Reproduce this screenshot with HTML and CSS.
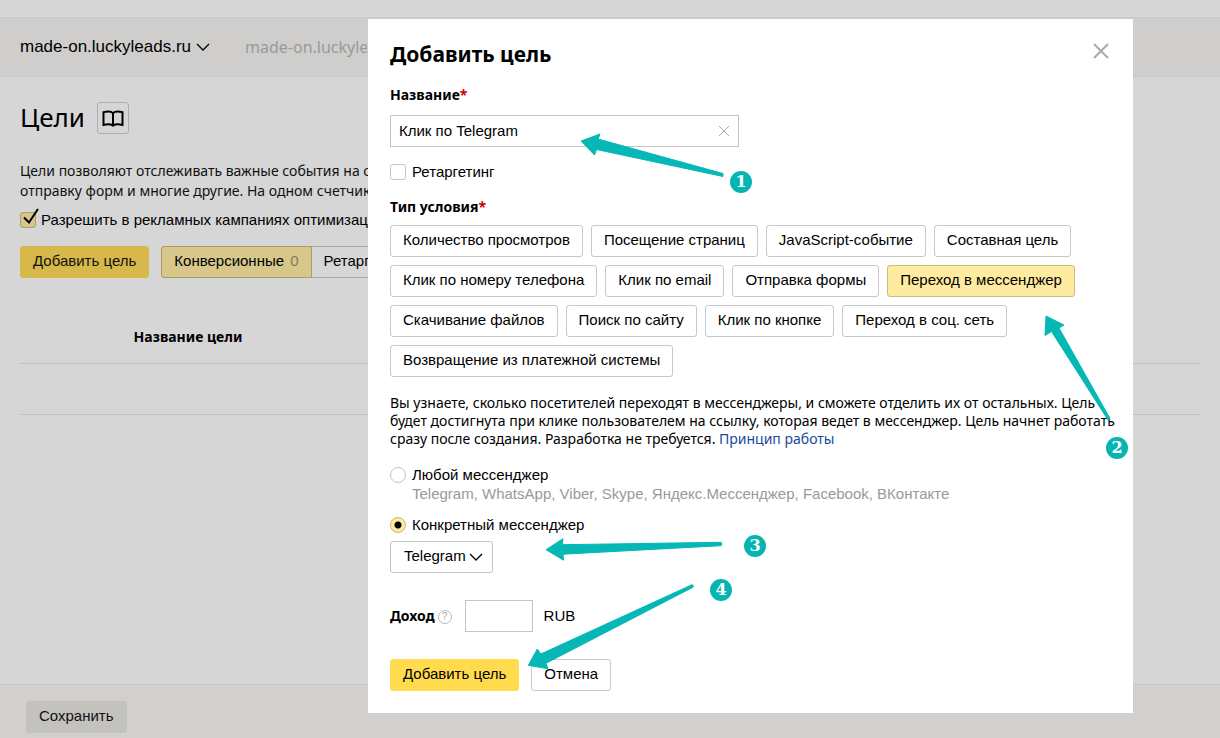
FILE: index.html
```html
<!DOCTYPE html>
<html lang="ru">
<head>
<meta charset="utf-8">
<title>Цели</title>
<link rel="stylesheet" href="styles.css">
</head>
<body>
<div class="page">
  <header class="topbar">
    <button class="site" type="button">made-on.luckyleads.ru
      <svg class="chevron" viewBox="0 0 14 8" aria-hidden="true"><path d="M1 1l6 6 6-6"/></svg>
    </button>
    <span class="site-url">made-on.luckyleads.ru</span>
  </header>

  <main class="content">
    <div class="title-row">
      <h1 class="title">Цели</h1>
      <button class="help-book" type="button" aria-label="Справка">
        <svg viewBox="0 0 22 17" aria-hidden="true"><path d="M11 3.200C9.300 1.300 5 1.200 1.500 2.200V15c3.500-.900 7.500-.700 9.500.600 2-1.300 6-1.500 9.500-.600V2.200C17 1.200 12.700 1.300 11 3.200zM11 3v12"/></svg>
      </button>
    </div>
    <p class="intro">Цели позволяют отслеживать важные события на сайте:<br>отправку форм и многие другие. На одном счетчике</p>
    <label class="check-row"><span class="tick"><input class="box" type="checkbox" checked><svg viewBox="0 0 20 20" aria-hidden="true"><path d="M4 9.500l5 5L18 1"/></svg></span>Разрешить в рекламных кампаниях оптимизацию</label>
    <div class="toolbar">
      <button class="btn btn-main" type="button">Добавить цель</button>
      <div class="tabs">
        <button class="tab tab-on" type="button">Конверсионные <span class="count">0</span></button><button class="tab" type="button">Ретаргетинговые</button>
      </div>
    </div>
    <table class="goals">
      <thead><tr><th>Название цели</th><th></th></tr></thead>
      <tbody><tr><td></td><td></td></tr></tbody>
    </table>
  </main>

  <footer class="bottom">
    <button class="btn btn-save" type="button">Сохранить</button>
  </footer>
</div>

<div class="overlay">
  <section class="modal" role="dialog" aria-labelledby="dialog-title">
    <div class="modal-head">
      <h2 class="modal-title" id="dialog-title">Добавить цель</h2>
      <button class="close" type="button" aria-label="Закрыть"><svg viewBox="0 0 16 16" aria-hidden="true"><path d="M1 1l14 14M15 1L1 15"/></svg></button>
    </div>

    <label class="label" for="name">Название<span class="req">*</span></label>
    <div class="name-field">
      <input class="input" id="name" type="text" value="Клик по Telegram">
      <button class="clear" type="button" aria-label="Очистить"><svg viewBox="0 0 12 12" aria-hidden="true"><path d="M1 1l10 10M11 1L1 11"/></svg></button>
    </div>
    <label class="option retarget"><input class="box" type="checkbox">Ретаргетинг</label>

    <h3 class="label">Тип условия<span class="req">*</span></h3>
    <div class="chips">
      <div class="chip-row">
        <button class="btn" type="button">Количество просмотров</button>
        <button class="btn" type="button">Посещение страниц</button>
        <button class="btn" type="button">JavaScript-событие</button>
        <button class="btn" type="button">Составная цель</button>
      </div>
      <div class="chip-row">
        <button class="btn" type="button">Клик по номеру телефона</button>
        <button class="btn" type="button">Клик по email</button>
        <button class="btn" type="button">Отправка формы</button>
        <button class="btn chip-on" type="button" aria-pressed="true">Переход в мессенджер</button>
      </div>
      <div class="chip-row">
        <button class="btn" type="button">Скачивание файлов</button>
        <button class="btn" type="button">Поиск по сайту</button>
        <button class="btn" type="button">Клик по кнопке</button>
        <button class="btn" type="button">Переход в соц. сеть</button>
      </div>
      <div class="chip-row">
        <button class="btn" type="button">Возвращение из платежной системы</button>
      </div>
    </div>

    <p class="about">Вы узнаете, сколько посетителей переходят в мессенджеры, и сможете отделить их от остальных. Цель<br>будет достигнута при клике пользователем на ссылку, которая ведет в мессенджер. Цель начнет работать<br>сразу после создания. Разработка не требуется. <a class="link" href="#">Принцип работы</a></p>

    <label class="option"><input class="radio" type="radio" name="messenger">Любой мессенджер</label>
    <p class="hint">Telegram, WhatsApp, Viber, Skype, Яндекс.Мессенджер, Facebook, ВКонтакте</p>
    <label class="option specific"><input class="radio" type="radio" name="messenger" checked>Конкретный мессенджер</label>
    <div class="select-wrap">
      <select class="select" aria-label="Мессенджер"><option>Telegram</option></select>
      <svg class="chevron" viewBox="0 0 14 8" aria-hidden="true"><path d="M1 1l6 6 6-6"/></svg>
    </div>

    <div class="income">
      <label class="income-label" for="income">Доход</label>
      <button class="question" type="button" aria-label="Подсказка">?</button>
      <input class="input income-input" id="income" type="text">
      <span>RUB</span>
    </div>

    <div class="actions">
      <button class="btn btn-primary" type="button">Добавить цель</button>
      <button class="btn" type="button">Отмена</button>
    </div>

    <svg class="arrows" viewBox="368 19 765 694" aria-hidden="true">
      <path d="M581 141l19-7-2 5 125 34.500v3L596.500 149.500 594.500 155z"/>
      <path d="M1046 316l18 9-5 3 51 90.500-2 1.500-56.500-88.500-6.500 4z"/>
      <path d="M546 549.700l17-11-.700 6L721 542.300q2 1.700 0 3.400L563 554.200l.500 6z"/>
      <path d="M528.300 665.300l9-16.300 3.500 5L692 584.700q2 .500 1 2.500L546 663.300l2 5.500z"/>
    </svg>
    <span class="mark mark-1">1</span>
    <span class="mark mark-2">2</span>
    <span class="mark mark-3">3</span>
    <span class="mark mark-4">4</span>
  </section>
</div>
</body>
</html>
```
FILE: styles.css
```css
* { box-sizing: border-box; }

body {
  margin: 0;
  background: #d6d6d6;
  color: #000;
  font: 15px/18px "Liberation Sans", Arial, sans-serif;
}

button, input, select { font: inherit; color: inherit; }
button { cursor: pointer; white-space: nowrap; }
h1, h2, h3, p { margin: 0; }

svg {
  display: block;
  fill: none;
  stroke: currentColor;
}

.page {
  display: flex;
  flex-direction: column;
  min-height: 100vh;
  overflow: hidden;
}

.topbar {
  display: flex;
  align-items: center;
  gap: 35px;
  height: 60px;
  margin-top: 17px;
  padding: 0 20px;
  background: #cfcecc;
  border-top: 1px solid #cacaca;
  border-bottom: 1px solid #c8c8c7;
  font-size: 16px;
}

.site {
  display: flex;
  align-items: center;
  gap: 5px;
  padding: 0;
  border: 0;
  background: none;
  font-size: 17px;
}

.chevron { width: 14px; height: 8px; stroke-width: 1.3; }

.site-url {
  width: 122px;
  overflow: hidden;
  color: #999;
  font: 16px/24px "Noto Sans", sans-serif;
  white-space: nowrap;
}

.content { flex: 1; padding: 25px 20px 24px; white-space: nowrap; }

.title-row { display: flex; align-items: center; gap: 12px; }

.title {
  padding-bottom: 2px;
  font: 26px/30px "Noto Sans", sans-serif;
}

.help-book {
  display: grid;
  place-items: center;
  width: 32px;
  height: 32px;
  padding: 0;
  border: 1px solid #aeaeae;
  border-radius: 3px;
  background: none;
}
.help-book svg { width: 22px; height: 17px; stroke-width: 2; }

.intro {
  margin-top: 27px;
  font: 14px/20px "Noto Sans", sans-serif;
  color: #111;
}

.check-row {
  display: flex;
  align-items: center;
  gap: 5px;
  margin-top: 10px;
}

.tick { position: relative; display: flex; }
.tick svg {
  position: absolute;
  left: 0;
  top: -4px;
  width: 20px;
  height: 20px;
  stroke-width: 2;
}

.box, .radio {
  appearance: none;
  flex: none;
  width: 16px;
  height: 16px;
  margin: 0;
  border: 1px solid #c4c4c4;
  border-radius: 3px;
  background: #fff;
}
.tick .box { border-color: #ab9d6c; background: #d8c78b; }

.radio { border-radius: 50%; }
.radio:checked {
  border-color: #c5b67c;
  background: radial-gradient(circle, #000 0 3px, #ffeba0 4px);
}

.toolbar { display: flex; gap: 12px; margin-top: 17px; }

.btn {
  height: 32px;
  padding: 0 12px 2px;
  border: 1px solid #c8c8c8;
  border-radius: 3px;
  background: #fff;
}
.btn-main { background: #d7b84a; border-color: #d7b84a; color: #111; }
.btn-save { background: #c4c2be; border-color: #c4c2be; color: #111; }
.btn-primary { background: #ffdb4d; border-color: #ffdb4d; }
.chip-on { background: #ffeba0; border-color: #ccbc80; }

.tabs { display: flex; }
.tab {
  height: 32px;
  padding: 0 12px 2px;
  border: 1px solid #a8a8a8;
  border-left: 0;
  border-radius: 0 3px 3px 0;
  background: none;
}
.tab-on {
  border: 1px solid #aa9c66;
  border-radius: 3px 0 0 3px;
  background: #d7c78a;
}
.count { margin-left: 2px; color: #857b56; }

.goals {
  width: 100%;
  margin-top: 33px;
  border-collapse: collapse;
  table-layout: fixed;
}
.goals th {
  height: 52px;
  padding: 0;
  border-bottom: 1px solid #bfbfbf;
  font: bold 14px/18px "Noto Sans", sans-serif;
}
.goals th:first-child { width: 336px; }
.goals td { height: 51px; border-bottom: 1px solid #bfbfbf; }

.bottom {
  padding: 16px 26px 5px;
  border-top: 1px solid #c6c5c4;
  background: #d1d0ce;
}

.overlay {
  position: absolute;
  top: 0;
  left: 0;
  right: 0;
  padding: 19px 87px 25px 368px;
}

.modal {
  position: relative;
  padding: 19px 22px 22px;
  background: #fff;
}

.modal-head {
  display: flex;
  align-items: center;
  justify-content: space-between;
  margin-bottom: 15px;
}

.modal-title {
  font: bold 21px/32px "Noto Sans", sans-serif;
}

.close, .clear {
  display: flex;
  padding: 0;
  border: 0;
  background: none;
  color: #aaa;
}
.close { padding: 0 2px 6px; }
.close svg { width: 16px; height: 16px; stroke-width: 2; }
.clear svg { width: 12px; height: 12px; }

.label {
  display: block;
  margin-bottom: 10px;
  font: bold 14px/20px "Noto Sans", sans-serif;
}
.req { color: #c00; }

.name-field { position: relative; width: 349px; max-width: 100%; }
.clear { position: absolute; right: 9px; top: 10px; }

.input {
  display: block;
  width: 100%;
  height: 32px;
  padding: 0 8px 2px;
  border: 1px solid #c4c4c4;
  border-radius: 0;
  background: #fff;
}

.option { display: flex; align-items: center; gap: 6px; }
.retarget { margin: 16px 0; }

.chips { display: flex; flex-direction: column; gap: 8px; margin-top: -2px; }
.chip-row { display: flex; gap: 8px; }

.about {
  margin: 17px 0 18px;
  font: 14px/18px "Noto Sans", sans-serif;
  white-space: nowrap;
}
.link { color: #1a4a9c; text-decoration: none; }

.hint { margin: 1px 0 13px 22px; color: #999; }
.specific { margin-bottom: 7px; }

.select-wrap { position: relative; width: 103px; }
.select {
  appearance: none;
  width: 100%;
  height: 32px;
  padding: 0 13px 2px;
  border: 1px solid #c4c4c4;
  border-radius: 3px;
  background: #fff;
}
.select-wrap .chevron {
  position: absolute;
  right: 10px;
  top: 12px;
  pointer-events: none;
}

.income { display: flex; align-items: center; margin-top: 27px; }
.income-label { font: bold 14px/20px "Noto Sans", sans-serif; }
.question {
  width: 14px;
  height: 14px;
  margin: 2px 13px 0 3px;
  padding: 0;
  border: 1px solid #bbb;
  border-radius: 50%;
  background: none;
  color: #aaa;
  font-size: 10px;
  line-height: 12px;
}
.income-input { width: 68px; margin-right: 11px; }

.actions { display: flex; gap: 12px; margin-top: 27px; }

.arrows {
  position: absolute;
  top: 0;
  left: 0;
  width: 765px;
  height: 694px;
  fill: #05b8b6;
  stroke: #05b8b6;
  stroke-width: 1;
  pointer-events: none;
}

.mark {
  position: absolute;
  width: 22px;
  height: 22px;
  border-radius: 50%;
  background: #05b5b3;
  color: #fff;
  font: bold 16px/22px "DejaVu Serif", serif;
  text-align: center;
}
.mark-1 { left: 362px; top: 152px; }
.mark-2 { left: 738px; top: 418px; }
.mark-3 { left: 376px; top: 516px; }
.mark-4 { left: 342px; top: 560px; }
```
